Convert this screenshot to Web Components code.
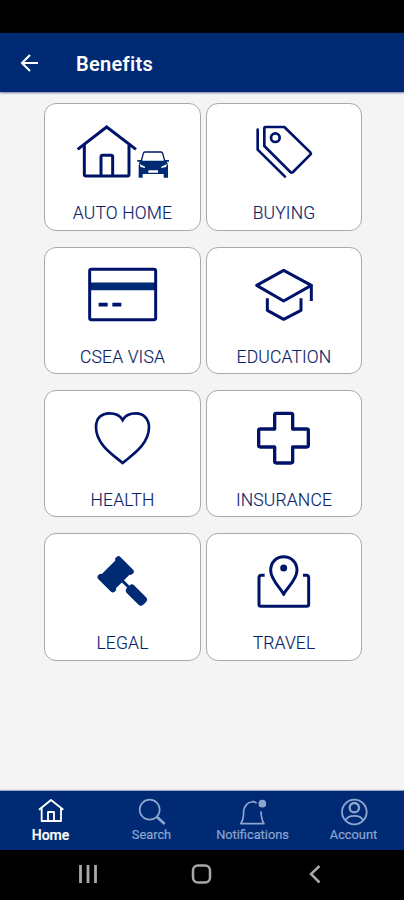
<!DOCTYPE html>
<html lang="en">
<head>
<meta charset="utf-8">
<title>Benefits</title>
<style>
body{margin:0;background:#000;font-family:Roboto,"Liberation Sans",sans-serif}
</style>
</head>
<body>
<benefits-app></benefits-app>
<script>
const ICONS = {
  autohome: `<g stroke-width="9"><path d="M113 154 200 87 288 154" stroke-linejoin="miter"/><path d="M133 141V229Q133 234 138 234H262Q267 234 267 229V141"/><path d="M183 232V177Q183 172 188 172H213Q218 172 218 177V232"/></g>
    <path d="M304 188 310 166Q311 162 315 162H363Q367 162 368 166L374 188" stroke-width="4"/>
    <path fill="#002b74" stroke="none" d="M292 186H304L309 188H369L374 186H387V191H380Q384 196 384 204V239H371V228H308V239H296V204Q296 196 299 191H292Z"/>
    <path fill="#fff" stroke="none" d="M299 198 315 206V210L302 207ZM381 198 364 206V210L378 207ZM325 217H354V224H325Z"/>`,
  buying: `<g stroke-width="8"><path d="M184 90Q184 87 187 87H244L322 163Q325 167 322 170L270 222Q266 226 262 222L184 144Z"/><circle cx="217" cy="119" r="13"/><path d="M164 95V155L246 236" stroke-linecap="round"/></g>`,
  card: `<path d="M149 133H347" stroke="#002b74" stroke-width="23"/><rect x="149" y="82" width="198" height="151" rx="5" stroke-width="9"/><path d="M176 188H203M217 188H244" stroke-width="11"/>`,
  education: `<g stroke-width="9"><path d="M161 130 242 85 325 130 242 177Z"/><path d="M325 128V177"/><path d="M193 169V205L242 232 294 205V169"/></g>`,
  health: `<path stroke-width="8" stroke-linejoin="miter" d="M248 234C224 213 168 180 168 127C168 97 187 85 208 85C226 85 241 92 248 105C255 92 270 85 288 85C309 85 327 100 327 127C327 180 272 213 248 234Z"/>`,
  insurance: `<path stroke-width="10" d="M220 85H264Q269 85 269 90V132H311Q316 132 316 137V181Q316 186 311 186H269V229Q269 234 264 234H220Q215 234 215 229V186H172Q167 186 167 181V137Q167 132 172 132H215V90Q215 85 220 85Z"/>`,
  legal: `<g fill="#002b74" stroke="none" transform="translate(227 139) rotate(-45)"><path d="M-33-30H33V30H-33Z"/><rect x="-47" y="-35" width="19" height="70" rx="9"/><rect x="28" y="-35" width="19" height="70" rx="9"/><rect x="-4" y="25" width="9" height="40"/><rect x="-16" y="53" width="32" height="70" rx="11"/></g>`,
  travel: `<g stroke-width="9"><path d="M242 199C235 182 203 157 203 127C203 102 221 86 242 86S282 102 282 127C282 157 249 182 242 199Z"/><circle cx="242" cy="120" r="10.5" fill="currentColor" stroke="none"/><path d="M185 142H175Q168 142 168 149V229Q168 235 174 235H311Q317 235 317 229V149Q317 142 310 142H300"/></g>`,
  home: `<g stroke-width="5.5"><path d="M117 89 153 60 190 89"/><path d="M125 82V123H183V82"/><path d="M144 122V96H162V122"/></g>`,
  search: `<circle cx="449" cy="89" r="30" stroke-width="5"/><path d="M471 111 494 132" stroke-width="8"/>`,
  bell: `<g stroke-width="5"><path d="M164 69C157 66 151 63 150 66C137 66 127 78 125 92C124 109 126 118 116 131H186C178 120 178 110 177 94"/><circle cx="181" cy="71" r="11.5" fill="currentColor" stroke="none"/></g>`,
  account: `<g stroke-width="5.5"><circle cx="457" cy="96" r="37"/><circle cx="457" cy="83" r="14" stroke-width="7"/><path d="M431 121C437 103 477 103 483 121"/></g>`
};

function define(name, render) {
  customElements.define(name, class extends HTMLElement {
    connectedCallback() {
      if (this.shadowRoot) return;
      const t = document.createElement('template');
      t.innerHTML = render(this);
      this.attachShadow({mode: 'open'}).append(t.content.cloneNode(true));
    }
  });
}

define('line-icon', el => `<style>
  :host{display:block;flex:none}
  svg{display:block;fill:none;stroke:currentColor;stroke-linejoin:round}
  </style><svg width="${el.getAttribute('w')}" height="${el.getAttribute('h')}" viewBox="${el.getAttribute('box')}" aria-hidden="true">${ICONS[el.getAttribute('name')]}</svg>`);

define('app-header', () => `<style>
  :host{display:flex;align-items:center;height:59px;box-sizing:border-box;padding:2px 0 0 20px;background:#002b74;color:#fff;box-shadow:0 1px 2px #6a76a0;position:relative}
  svg{width:19px;height:20px;fill:none;stroke:currentColor;stroke-width:2.1;margin:-2px 37px 0 0}
  h1{margin:0;font-size:20px;line-height:24px;font-weight:600;letter-spacing:.3px}
  </style><svg viewBox="0 0 19 20"><path d="M18 10H2M10 2 2 10 10 18"/></svg><h1><slot></slot></h1>`);

define('benefit-card', el => {
  const left = el.hasAttribute('left');
  return `<style>
  :host{display:flex;flex-direction:column;align-items:center;box-sizing:border-box;border:1px solid #a9a9ab;border-radius:12px;background:#fff;color:#00136a;overflow:hidden}
  line-icon{margin:-1px -1px 0}
  span{font-size:17.500px;line-height:20px;margin-top:5px;white-space:nowrap;font-weight:300;letter-spacing:.15px;color:#0a1f69;-webkit-text-stroke:.15px currentColor}
  </style><line-icon name="${el.getAttribute('icon')}" w="${left ? 157 : 156}" h="95" box="${left ? '12 15 471' : '9 15 468'} 285"></line-icon><span><slot></slot></span>`;
});

define('benefit-grid', () => `<style>
  :host{display:grid;grid-template-columns:157px 156px;grid-template-rows:128px 127px 127px 128px;column-gap:5px;row-gap:16px;padding:11px 0 0 44px;flex:1;background:#f4f4f5}
  </style><slot></slot>`);

define('nav-tab', el => `<style>
  :host{display:flex;flex-direction:column;align-items:center;width:101px;color:#8ea5d0}
  :host([active]){color:#fff}
  span{font-size:12.800px;line-height:16px;margin-top:1px;-webkit-text-stroke:.2px currentColor}
  :host([active]) span{font-size:14px;font-weight:500}
  </style><line-icon name="${el.getAttribute('icon')}" w="101" h="35" box="${el.getAttribute('box')}"></line-icon><span><slot></slot></span>`);

define('tab-bar', () => `<style>
  :host{display:flex;height:59px;background:#002b74;box-shadow:0 -1px 1px #9aa5c3;position:relative}
  </style><slot></slot>`);

define('system-bar', () => `<style>
  :host{display:block;height:50px;background:#000}
  svg{display:block;fill:none;stroke:#a8a8a8}
  </style><svg width="404" height="50" viewBox="0 0 404 50"><path d="M80.5 15V33M88 15V33M95.500 15V33" stroke-width="2.800"/><rect x="193" y="15.500" width="17" height="17" rx="5" stroke-width="2.500"/><path d="M319.500 16 311 24 319.500 32.500" stroke-width="2.500"/></svg>`);

define('benefits-app', () => `<style>
  :host{display:flex;flex-direction:column;width:404px;height:900px;box-sizing:border-box;padding-top:33px;background:#000;overflow:hidden}
  </style>
  <app-header>Benefits</app-header>
  <benefit-grid>
    <benefit-card left icon="autohome">AUTO HOME</benefit-card>
    <benefit-card icon="buying">BUYING</benefit-card>
    <benefit-card left icon="card">CSEA VISA</benefit-card>
    <benefit-card icon="education">EDUCATION</benefit-card>
    <benefit-card left icon="health">HEALTH</benefit-card>
    <benefit-card icon="insurance">INSURANCE</benefit-card>
    <benefit-card left icon="legal">LEGAL</benefit-card>
    <benefit-card icon="travel">TRAVEL</benefit-card>
  </benefit-grid>
  <tab-bar>
    <nav-tab active icon="home" box="0 33 303 105">Home</nav-tab>
    <nav-tab icon="search" box="303 33 303 105">Search</nav-tab>
    <nav-tab icon="bell" box="0 33 303 105">Notifications</nav-tab>
    <nav-tab icon="account" box="303 33 303 105">Account</nav-tab>
  </tab-bar>
  <system-bar></system-bar>`);
</script>
</body>
</html>
